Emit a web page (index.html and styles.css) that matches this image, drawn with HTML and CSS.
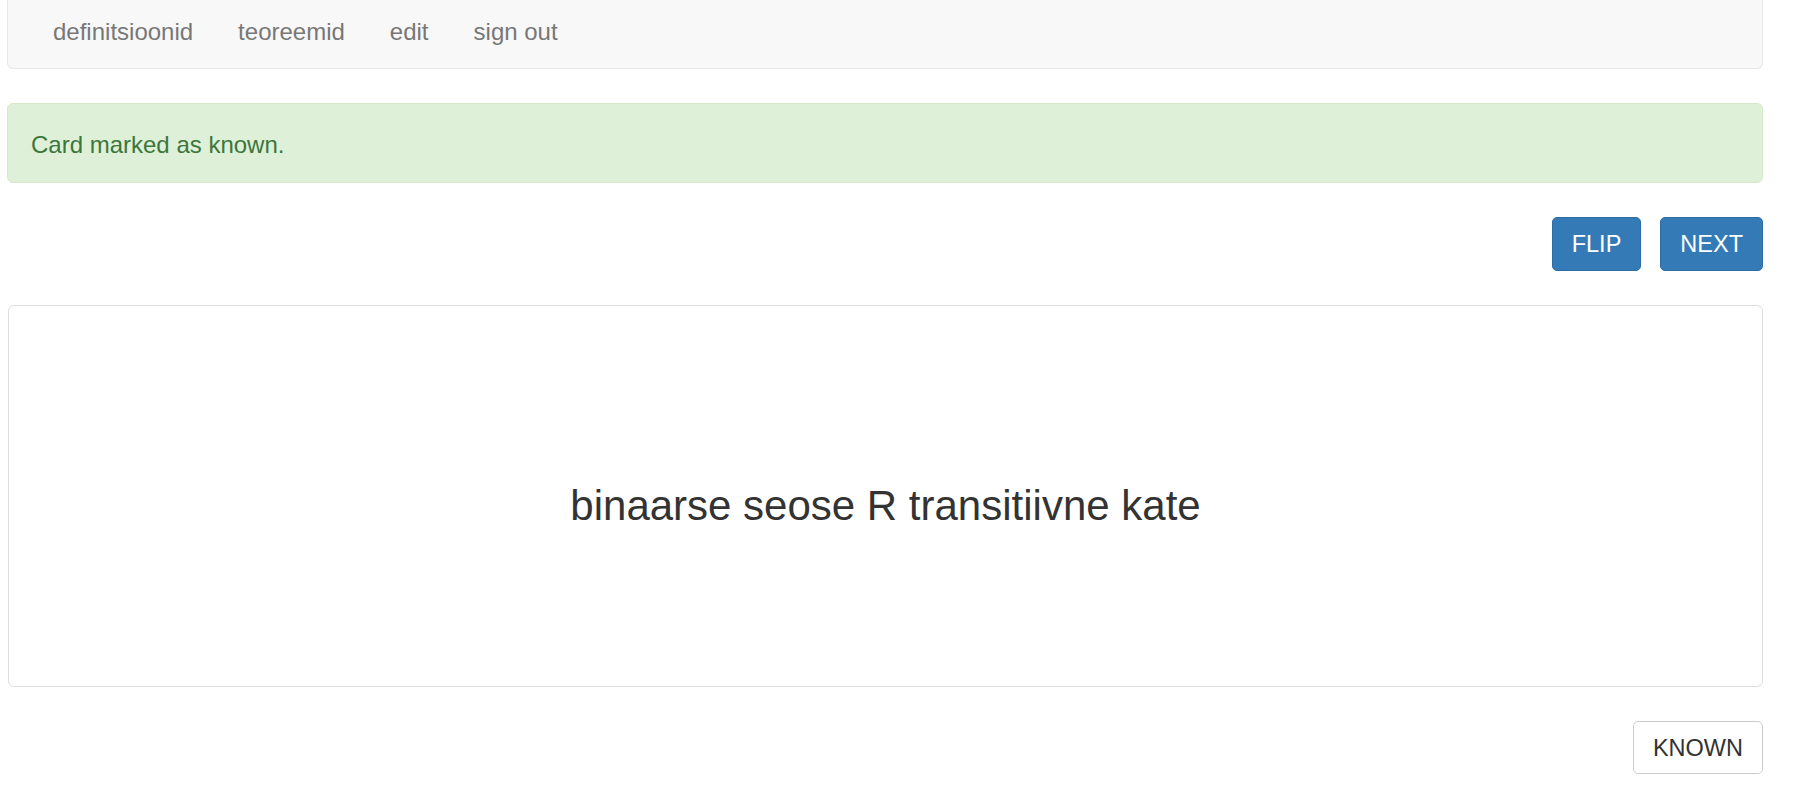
FILE: index.html
```html
<!DOCTYPE html>
<html lang="et">
<head>
<meta charset="utf-8">
<title>Flashcards</title>
<link rel="stylesheet" href="styles.css">
</head>
<body>
<div class="container">
  <nav class="navbar">
    <ul class="nav">
      <li><a href="#">definitsioonid</a></li>
      <li><a href="#">teoreemid</a></li>
      <li><a href="#">edit</a></li>
      <li><a href="#">sign out</a></li>
    </ul>
  </nav>
  <div class="alert">Card marked as known.</div>
  <div class="actions">
    <button class="btn btn-primary">FLIP</button>
    <button class="btn btn-primary">NEXT</button>
  </div>
  <div class="card">
    <h3 class="card-text">binaarse seose R transitiivne kate</h3>
  </div>
  <div class="actions">
    <button class="btn btn-default">KNOWN</button>
  </div>
</div>
</body>
</html>
```

FILE: styles.css
```css
html, body {
  margin: 0;
  padding: 0;
  background: #fff;
}
body {
  font-family: "Liberation Sans", Arial, Helvetica, sans-serif;
  color: #333;
}
.container {
  width: 1756px;
  margin-left: 7px;
  display: flex;
  flex-direction: column;
  gap: 34px;
}
.navbar {
  height: 68px;
  background: #f8f8f8;
  border: 1px solid #e7e7e7;
  border-top: none;
  border-radius: 0 0 6px 6px;
}
.nav {
  list-style: none;
  margin: 0;
  padding: 0 0 0 22.5px;
  display: flex;
}
.nav li a {
  display: block;
  padding: 14.5px 22.5px 0;
  line-height: 34px;
  font-size: 24px;
  color: #777;
  text-decoration: none;
}
.alert {
  height: 74px;
  box-sizing: content-box;
  padding: 4px 23px 0;
  display: flex;
  align-items: center;
  background: #dff0d8;
  border: 1px solid #d6e9c6;
  border-radius: 6px;
  color: #3c763d;
  font-size: 24px;
}
.actions {
  display: flex;
  justify-content: flex-end;
  gap: 19px;
}
.btn {
  font-family: "Liberation Sans", Arial, Helvetica, sans-serif;
  font-size: 23.5px;
  line-height: 32px;
  padding: 10px 19px;
  border-radius: 5px;
  cursor: pointer;
  margin: 0;
}
.btn-primary {
  height: 54px;
  background: #337ab7;
  border: 1px solid #2e6da4;
  color: #fff;
}
.btn-default {
  height: 53px;
  padding-top: 9px;
  padding-bottom: 9px;
  background: #fff;
  border: 1px solid #ccc;
  color: #333;
}
.card {
  height: 380px;
  margin-left: 1px;
  border: 1px solid #ddd;
  border-radius: 6px;
  display: flex;
  align-items: center;
  justify-content: center;
  box-sizing: content-box;
}
.card-text {
  margin: 20px 0 0;
  font-size: 42px;
  font-weight: 400;
  color: #333;
}
```
